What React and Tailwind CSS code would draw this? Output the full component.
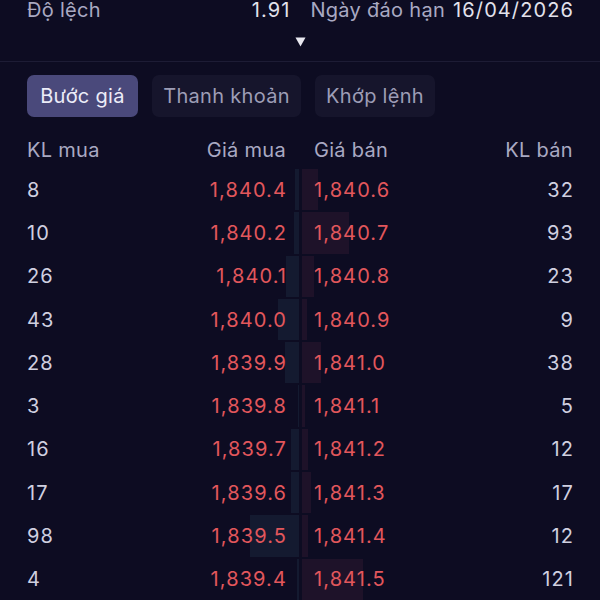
import React from "react";

const rows = [
  { bidVol: 8, bid: "1,840.4", ask: "1,840.6", askVol: 32 },
  { bidVol: 10, bid: "1,840.2", ask: "1,840.7", askVol: 93 },
  { bidVol: 26, bid: "1,840.1", ask: "1,840.8", askVol: 23 },
  { bidVol: 43, bid: "1,840.0", ask: "1,840.9", askVol: 9 },
  { bidVol: 28, bid: "1,839.9", ask: "1,841.0", askVol: 38 },
  { bidVol: 3, bid: "1,839.8", ask: "1,841.1", askVol: 5 },
  { bidVol: 16, bid: "1,839.7", ask: "1,841.2", askVol: 12 },
  { bidVol: 17, bid: "1,839.6", ask: "1,841.3", askVol: 17 },
  { bidVol: 98, bid: "1,839.5", ask: "1,841.4", askVol: 12 },
  { bidVol: 4, bid: "1,839.4", ask: "1,841.5", askVol: 121 },
];

const tabs = [
  { label: "Bước giá", w: "w-[111px]" },
  { label: "Thanh khoản", w: "w-[149px]" },
  { label: "Khớp lệnh", w: "w-[120px]" },
];

function BookRow({ row }) {
  return (
    <div className="flex h-[43.3px] px-[27px] items-center text-[20px] tracking-[1.1px]">
      <div className="relative flex h-full w-[273px] items-center justify-between pr-[13px]">
        <div
          className="absolute right-[1px] top-[1px] bottom-[1px] bg-[#141a30]"
          style={{ width: row.bidVol * 0.5 }}
        />
        <span className="relative text-[#d0d0e0]">{row.bidVol}</span>
        <span className="relative text-[#e2575c]">{row.bid}</span>
      </div>
      <div className="relative flex h-full flex-1 items-center justify-between pl-[14px]">
        <div
          className="absolute left-[2px] top-[1px] bottom-[1px] bg-[#1e1229]"
          style={{ width: row.askVol * 0.5 }}
        />
        <span className="relative text-[#e2575c]">{row.ask}</span>
        <span className="relative -mr-[1px] text-[#d0d0e0]">{row.askVol}</span>
      </div>
    </div>
  );
}

export default function App() {
  return (
    <div className="w-[600px] h-[600px] overflow-hidden bg-[#0d0c22] font-['Inter',sans-serif]">
      <div className="-mt-[1px] flex h-[22px] items-center px-[27px] text-[20px] leading-[20px] tracking-[0.3px]">
        <span className="text-[#a9a9c2]">Độ lệch</span>
        <span className="ml-auto tracking-[1.1px] text-[#e2e2ec]">1.91</span>
        <span className="ml-[20px] text-[#a9a9c2]">Ngày đáo hạn</span>
        <span className="ml-[8px] -mr-[1px] tracking-[1.1px] text-[#e2e2ec]">16/04/2026</span>
      </div>
      <div className="flex h-[41px] items-center justify-center border-b border-[#1d1c35]">
        <svg width="11" height="10" viewBox="0 0 11 10" className="mt-[1px]">
          <path d="M0.5 0.5 H10.5 L5.5 9.5 Z" fill="#e8e8f0" />
        </svg>
      </div>
      <div className="flex gap-[14px] px-[27px] pt-[13px]">
        {tabs.map((t, i) => (
          <div
            key={t.label}
            className={
              i === 0
                ? `flex h-[42px] ${t.w} items-center justify-center rounded-[7px] bg-[#4a497b] text-[20px] tracking-[0.3px] text-[#ececf8]`
                : `flex h-[42px] ${t.w} items-center justify-center rounded-[7px] bg-[#16152c] text-[20px] tracking-[0.3px] text-[#9d9db6]`
            }
          >
            {t.label}
          </div>
        ))}
      </div>
      <div className="flex h-[51px] items-center px-[27px] pt-[14px] text-[20px] tracking-[0.3px] text-[#a9a9c2]">
        <div className="flex w-[273px] justify-between pr-[14px]">
          <span>KL mua</span>
          <span>Giá mua</span>
        </div>
        <div className="flex flex-1 justify-between pl-[14px]">
          <span>Giá bán</span>
          <span>KL bán</span>
        </div>
      </div>
      <div>
        {rows.map((r) => (
          <BookRow key={r.bid} row={r} />
        ))}
      </div>
    </div>
  );
}
